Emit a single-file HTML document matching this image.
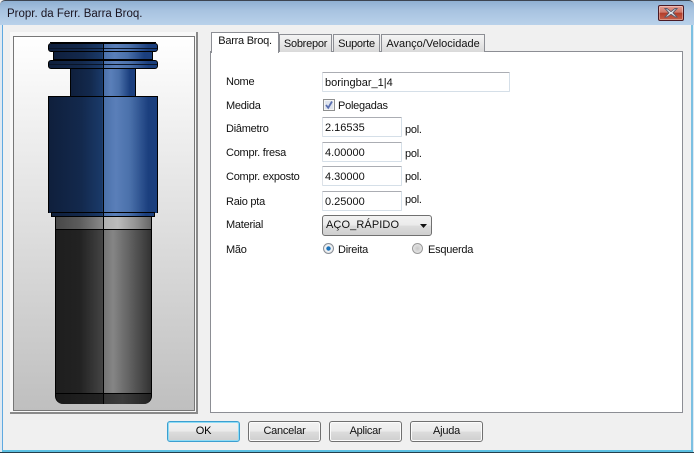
<!DOCTYPE html>
<html><head><meta charset="utf-8"><style>
html,body{margin:0;padding:0;background:#f0f0f0}
#w{position:relative;width:694px;height:453px;overflow:hidden;font-family:"Liberation Sans",sans-serif;font-size:11px;letter-spacing:-.25px;color:#111;background:#f0f0f0}
#w div{position:absolute;box-sizing:border-box}
.t{white-space:nowrap;line-height:14px}
.in{background:#fff;border:1px solid #d5dfe8;border-top-color:#abadb3;border-left-color:#dde2e8;border-radius:1px;padding:3px 0 0 2px;line-height:14px;color:#111;font-size:11px;letter-spacing:0}
.b{height:21px;width:73px;top:421px;border:1px solid #707070;border-radius:3px;background:linear-gradient(#f2f2f2 0,#ebebeb 48%,#dcdcdc 52%,#cfcfcf 100%);text-align:center;line-height:19px;box-shadow:inset 0 0 0 1px #fbfbfb}
.tab{top:34px;height:18px;border:1px solid #8c8e94;border-bottom:none;background:linear-gradient(#f4f4f4,#e8e8e8 50%,#d9d9d9);text-align:center;line-height:18px}
.blue{background:linear-gradient(90deg,#0f1f3c 0,#13294d 30%,#1a3a6a 49.5%,#4a70aa 50.5%,#5a7fb9 62%,#4a70aa 75%,#1b3f7e 92%,#1b3f7e 100%);border:1px solid #000}
.gray{background:linear-gradient(90deg,#1e1e1e 0,#222 25%,#444 49.5%,#747474 50.5%,#858585 60%,#5c5c5c 80%,#333 100%);border:1px solid #000}
.lg{background:linear-gradient(90deg,#484848 0,#5c5c5c 25%,#8a8a8a 49.5%,#b0b0b0 50.5%,#bcbcbc 65%,#909090 85%,#666 100%);border:1px solid #000}
</style></head><body><div id="w">
<div style="left:0;top:0;width:694px;height:25px;background:linear-gradient(#8fb0d2,#a8c3e0 40%,#b9d1ea);border-radius:5px 5px 0 0;border-top:1px solid #3c4450"></div>
<div style="left:0;top:25px;width:2px;height:428px;background:#dfe9f2"></div>
<div style="left:2px;top:25px;width:1px;height:426px;background:#5fa9e0"></div>
<div style="left:691px;top:25px;width:2px;height:426px;background:#7cc0e2"></div>
<div style="left:693px;top:25px;width:1px;height:428px;background:#dfe9f2"></div>
<div style="left:2px;top:450px;width:691px;height:2px;background:#5cc0e2"></div>
<div style="left:0;top:452px;width:694px;height:1px;background:#24404e"></div>

<div class="t" style="left:7px;top:7px;font-size:11.5px;letter-spacing:0;color:#1a1420">Propr. da Ferr. Barra Broq.</div>

<div style="left:658px;top:5px;width:26px;height:16px;border:1px solid #4a1a24;border-radius:2px;background:linear-gradient(#e39a8e,#d07a6c 45%,#b23c2a 50%,#c8604a);box-shadow:inset 0 0 0 1px rgba(255,255,255,.35)">
<svg width="24" height="14" style="position:absolute;left:0;top:0"><path d="M8 2.5L12 5.6L16 2.5H18L14 6.9L18 11H16L12 8.2L8 11H6L10 6.9L6 2.5Z" fill="#eef0f4" stroke="#5c5c6c" stroke-width="1"/></svg></div>

<!-- left frame -->
<div style="left:10px;top:32px;width:188px;height:382px;background:#f8f8f8;border-right:2px solid #8a8a8a;border-bottom:2px solid #8a8a8a"></div>
<div style="left:13px;top:36px;width:182px;height:375px;border:1px solid #777;background:linear-gradient(#ffffff,#bfbfbf)"></div>

<!-- tool -->
<div class="blue" style="left:70px;top:68px;width:66px;height:29px"></div>
<div class="blue" style="left:53px;top:51px;width:100px;height:9px"></div>
<div class="blue" style="left:48px;top:43px;width:110px;height:9px;border-radius:3px"></div>
<div style="left:50px;top:42px;width:106px;height:1px;background:#000"></div>
<div style="left:49px;top:48px;width:108px;height:1px;background:#0a1528"></div>
<div class="blue" style="left:48px;top:60px;width:110px;height:9px;border-radius:3px"></div>
<div style="left:49px;top:64px;width:108px;height:1px;background:#0a1528"></div>
<div class="blue" style="left:48px;top:96px;width:110px;height:117px;border-bottom:none"></div>
<div class="blue" style="left:51px;top:212px;width:104px;height:5px;border-top:1px solid #000"></div>
<div class="lg" style="left:55px;top:216px;width:97px;height:14px"></div>
<div class="gray" style="left:55px;top:229px;width:97px;height:165px;border-top:1px solid #000"></div>
<div class="gray" style="left:55px;top:393px;width:97px;height:11px;border-radius:0 0 8px 8px;border-bottom:none;background:linear-gradient(90deg,#1a1a1a 0,#222 49%,#333 51%,#3c3c3c 70%,#222 100%)"></div>
<div style="left:103px;top:42px;width:1px;height:362px;background:#000"></div>

<!-- tab panel -->
<div style="left:210px;top:51px;width:473px;height:362px;background:#fff;border:1px solid #8c8e94"></div>
<div class="tab" style="left:279px;width:53px">Sobrepor</div>
<div class="tab" style="left:333px;width:47px">Suporte</div>
<div class="tab" style="left:381px;width:104px;letter-spacing:0">Avanço/Velocidade</div>
<div class="tab" style="left:211px;top:32px;width:68px;height:21px;background:#fff;line-height:17px;z-index:2">Barra Broq.</div>

<!-- labels -->
<div class="t" style="left:226px;top:75px">Nome</div>
<div class="t" style="left:226px;top:99px">Medida</div>
<div class="t" style="left:226px;top:122px">Diâmetro</div>
<div class="t" style="left:226px;top:146px">Compr. fresa</div>
<div class="t" style="left:226px;top:170px">Compr. exposto</div>
<div class="t" style="left:226px;top:195px">Raio pta</div>
<div class="t" style="left:226px;top:218px">Material</div>
<div class="t" style="left:226px;top:243px">Mão</div>

<div class="in" style="left:322px;top:72px;width:188px;height:20px">boringbar_1|4</div>
<div class="in" style="left:322px;top:117px;width:80px;height:20px">2.16535</div>
<div class="in" style="left:322px;top:142px;width:80px;height:20px">4.00000</div>
<div class="in" style="left:322px;top:166px;width:80px;height:20px">4.30000</div>
<div class="in" style="left:322px;top:191px;width:80px;height:20px">0.25000</div>
<div class="t" style="left:405px;top:123px">pol.</div>
<div class="t" style="left:405px;top:147px">pol.</div>
<div class="t" style="left:405px;top:170px">pol.</div>
<div class="t" style="left:405px;top:193px">pol.</div>

<div style="left:323px;top:99px;width:12px;height:12px;border:1px solid #8e8f8f;background:#dfe4ee;box-shadow:inset 0 0 0 1px #f4f4f4">
<svg width="10" height="10" style="position:absolute;left:0;top:0"><path d="M2 5L4.2 7.8L8 1.5" fill="none" stroke="#5a6fb0" stroke-width="1.8"/></svg></div>
<div class="t" style="left:338px;top:99px">Polegadas</div>

<div style="left:322px;top:215px;width:110px;height:21px;border:1px solid #707070;border-radius:3px;background:linear-gradient(#f2f2f2,#ebebeb 48%,#dcdcdc 52%,#cfcfcf);padding-left:3px;line-height:19px;font-size:11px;letter-spacing:.1px">AÇO_RÁPIDO
<svg width="9" height="5" style="position:absolute;left:97px;top:8px"><path d="M0 0H7L3.5 4Z" fill="#111"/></svg></div>

<div style="left:323px;top:243px;width:11px;height:11px;border-radius:50%;border:1px solid #8a8f96;background:radial-gradient(circle,#1c78c0 0,#1a6fb5 28%,#f4f6f8 40%,#d6d9dc 100%)"></div>
<div class="t" style="left:338px;top:243px">Direita</div>
<div style="left:412px;top:243px;width:11px;height:11px;border-radius:50%;border:1px solid #9a9a9a;background:radial-gradient(circle,#c8c8c8 0,#dcdcdc 50%,#f2f2f2 100%)"></div>
<div class="t" style="left:428px;top:243px">Esquerda</div>

<!-- buttons -->
<div class="b" style="left:167px;border-color:#3c9fd0;box-shadow:inset 0 0 0 1px #8fdcf5;color:#000">OK</div>
<div class="b" style="left:248px">Cancelar</div>
<div class="b" style="left:329px">Aplicar</div>
<div class="b" style="left:410px">Ajuda</div>
</div></body></html>
